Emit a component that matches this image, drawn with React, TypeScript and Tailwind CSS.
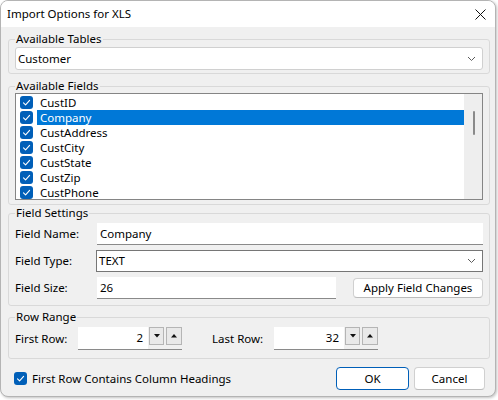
import React from 'react';

const fields = ['CustID', 'Company', 'CustAddress', 'CustCity', 'CustState', 'CustZip', 'CustPhone'];

function Check() {
  return (
    <span className="flex h-[13px] w-[13px] shrink-0 items-center justify-center rounded-[3px] bg-[#005fb8]">
      <svg width="9" height="9" viewBox="0 0 9 9" fill="none">
        <path d="M1.5 4.8 L3.6 6.8 L7.6 2.4" stroke="white" strokeWidth="1.1" strokeLinecap="round" strokeLinejoin="round" />
      </svg>
    </span>
  );
}

function Chevron() {
  return (
    <svg width="9" height="6" viewBox="0 0 9 6" fill="none" className="mr-[6px]">
      <path d="M1 1 L4.5 4.5 L8 1" stroke="#5c5c5c" strokeWidth="1" />
    </svg>
  );
}

function Group({ label, className, children }: { label: string; className?: string; children: React.ReactNode }) {
  return (
    <fieldset className={'min-w-0 rounded-[3px] border border-[#d9d9d9] pl-[6px] pr-[6px] ' + (className ?? '')}>
      <legend className="px-[1px] text-[11.5px] leading-[16px]">{label}</legend>
      {children}
    </fieldset>
  );
}

function Spin({ value }: { value: string }) {
  return (
    <div className="flex h-[23px] w-[104px] items-start border-b border-[#8a8a8a]">
      <div className="flex h-[22px] w-[70px] items-center justify-end bg-white pr-[5px]">{value}</div>
      <button className="ml-[1px] flex h-[18px] w-[15px] items-center justify-center border border-[#b5b5b5] bg-[#e9e9e9]">
        <svg width="6" height="4" viewBox="0 0 6 4"><path d="M0 0 L6 0 L3 3.5 Z" fill="#111" /></svg>
      </button>
      <button className="ml-[2px] flex h-[18px] w-[16px] items-center justify-center border border-[#b5b5b5] bg-[#e9e9e9]">
        <svg width="6" height="4" viewBox="0 0 6 4"><path d="M0 3.5 L6 3.5 L3 0 Z" fill="#111" /></svg>
      </button>
    </div>
  );
}

export default function App() {
  return (
    <div className="h-[400px] w-[498px] bg-white text-[11.5px] leading-[16px] text-black" style={{ fontFamily: '"Noto Sans", sans-serif' }}>
      <div className="flex h-[397px] w-[496px] flex-col overflow-hidden rounded-[8px] border border-[#b4b4b4] bg-[#f0f0f0] shadow-[1px_1px_3px_rgba(0,0,0,0.25)]">
        <div className="flex h-[26px] shrink-0 items-center justify-between bg-white pl-[6px] pr-[9px]">
          <span>Import Options for XLS</span>
          <svg width="11" height="11" viewBox="0 0 11 11">
            <path d="M0.5 0.5 L10.5 10.5 M10.5 0.5 L0.5 10.5" stroke="#111" strokeWidth="1" />
          </svg>
        </div>

        <div className="flex flex-col pl-[7px] pr-[5px] pt-[4px]">
          <Group label="Available Tables" className="pb-[3px]">
            <div className="flex h-[23px] items-center justify-between rounded-[3px] border border-[#d0d0d0] bg-white pl-[2px]">
              <span>Customer</span>
              <Chevron />
            </div>
          </Group>

          <Group label="Available Fields" className="mt-[4px] pb-[4px]">
            <div className="-mt-[1px] flex h-[107px] border border-[#858585] bg-white">
              <div className="flex flex-1 flex-col pt-[1px]">
                {fields.map((f, i) => (
                  <div key={f} className="flex h-[15px] items-center pl-[4px] leading-[15px]">
                    <Check />
                    <span
                      className={
                        'ml-[4px] flex h-[15px] flex-1 items-center pl-[3px] ' +
                        (i === 1 ? 'bg-[#0078d7] text-white' : '')
                      }
                    >
                      {f}
                    </span>
                  </div>
                ))}
              </div>
              <div className="flex w-[18px] justify-center bg-[#eeeeee] pt-[17px]">
                <div className="ml-[1px] h-[24px] w-[2px] rounded-full bg-[#8a8a8a]" />
              </div>
            </div>
          </Group>

          <Group label="Field Settings" className="pb-[6px]">
            <div className="mt-[2px] flex h-[22px] items-center">
              <span className="w-[82px] shrink-0">Field Name:</span>
              <div className="flex h-[22px] flex-1 items-center border-b border-[#8a8a8a] bg-white pl-[3px]">Company</div>
            </div>
            <div className="mt-[5px] flex h-[22px] items-center">
              <span className="w-[81px] shrink-0">Field Type:</span>
              <div className="flex h-[22px] flex-1 items-center justify-between border border-[#767676] bg-white pl-[2px]">
                <span>TEXT</span>
                <Chevron />
              </div>
            </div>
            <div className="mt-[5px] flex h-[22px] items-center">
              <span className="w-[82px] shrink-0">Field Size:</span>
              <div className="flex h-[22px] w-[239px] items-center border-b border-[#8a8a8a] bg-white pl-[3px]">26</div>
              <button className="ml-auto flex h-[20px] w-[130px] items-center justify-center rounded-[4px] border border-[#d0d0d0] border-b-[#bcbcbc] bg-white">
                Apply Field Changes
              </button>
            </div>
          </Group>

          <Group label="Row Range" className="mt-[3px] pb-[8px]">
            <div className="mt-[2px] flex h-[23px] items-center">
              <span className="w-[63px] shrink-0">First Row:</span>
              <Spin value="2" />
              <span className="ml-[30px] w-[62px] shrink-0">Last Row:</span>
              <Spin value="32" />
            </div>
          </Group>

          <div className="mt-[8px] flex h-[23px] items-center">
            <span className="ml-[6px]">
              <Check />
            </span>
            <span className="ml-[5px]">First Row Contains Column Headings</span>
            <button className="ml-auto flex h-[23px] w-[73px] items-center justify-center rounded-[4px] border-[1.5px] border-[#005fb8] bg-white">
              OK
            </button>
            <button className="ml-[5px] mr-[5px] flex h-[23px] w-[71px] items-center justify-center rounded-[4px] border border-[#d0d0d0] border-b-[#bcbcbc] bg-white">
              Cancel
            </button>
          </div>
        </div>
      </div>
    </div>
  );
}
